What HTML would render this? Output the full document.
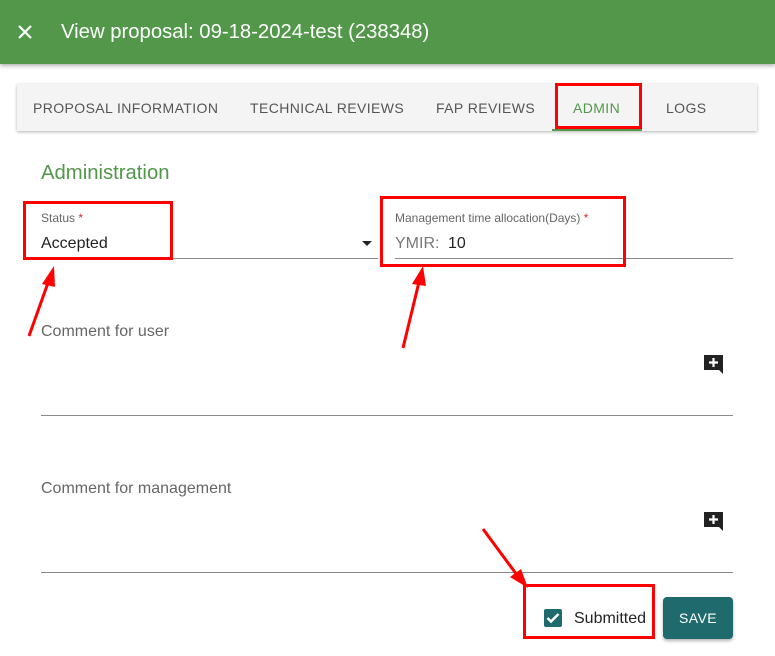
<!DOCTYPE html>
<html><head><meta charset="utf-8"><style>
*{box-sizing:border-box;margin:0;padding:0}
body{width:775px;height:656px;background:#fff;font-family:"Liberation Sans",sans-serif;position:relative;overflow:hidden}
.abs{position:absolute}
.hdr{left:0;top:0;width:775px;height:64px;background:#52974a;box-shadow:0 2px 4px rgba(0,0,0,.3)}
.tabs{left:17px;top:84px;width:740px;height:47px;background:#f4f4f4;box-shadow:0 1px 3px rgba(0,0,0,.3)}
.tab{position:absolute;top:100px;font-size:14px;color:#555;letter-spacing:.4px}
.red{position:absolute;border:3px solid #f00}
.line{position:absolute;height:1px;background:#8a8a8a}
</style></head><body>
<div class="abs hdr"></div>
<svg class="abs" style="left:17px;top:24px" width="16" height="16"><path d="M2 2L14 14M14 2L2 14" stroke="#fff" stroke-width="2.2"/></svg>
<div class="abs" style="left:61px;top:21px;color:#fff;font-size:20.3px">View proposal: 09-18-2024-test (238348)</div>
<div class="abs tabs"></div>
<div class="tab" style="left:33px">PROPOSAL INFORMATION</div>
<div class="tab" style="left:250px">TECHNICAL REVIEWS</div>
<div class="tab" style="left:436px">FAP REVIEWS</div>
<div class="tab" style="left:573px;color:#52974a">ADMIN</div>
<div class="tab" style="left:666px">LOGS</div>
<div class="abs" style="left:552px;top:129px;width:90px;height:2px;background:#52974a"></div>
<div class="red" style="left:555px;top:83px;width:87px;height:46px"></div>
<div class="abs" style="left:41px;top:162px;font-size:20.3px;color:#52974a">Administration</div>
<div class="abs" style="left:41px;top:211px;font-size:12px;color:#666">Status <span style="color:#d32f2f">*</span></div>
<div class="abs" style="left:41px;top:235px;font-size:16px;color:#222">Accepted</div>
<div class="abs" style="left:362px;top:241px;width:0;height:0;border-left:5px solid transparent;border-right:5px solid transparent;border-top:5px solid #222"></div>
<div class="line" style="left:41px;top:258px;width:337px"></div>
<div class="red" style="left:23px;top:201px;width:150px;height:59px"></div>
<div class="abs" style="left:395px;top:211px;font-size:12px;color:#666">Management time allocation(Days) <span style="color:#d32f2f">*</span></div>
<div class="abs" style="left:395px;top:235px;font-size:16px;color:#777">YMIR:</div>
<div class="abs" style="left:448px;top:235px;font-size:16px;color:#222">10</div>
<div class="line" style="left:395px;top:258px;width:338px"></div>
<div class="red" style="left:380px;top:196px;width:246px;height:71px"></div>
<div class="abs" style="left:41px;top:323px;font-size:16px;color:#666">Comment for user</div>
<div class="line" style="left:41px;top:415px;width:692px"></div>
<div class="abs" style="left:41px;top:480px;font-size:16px;color:#666">Comment for management</div>
<div class="line" style="left:41px;top:572px;width:692px"></div>
<svg class="abs" style="left:703px;top:354px" width="21" height="21" viewBox="0 0 21 21"><path d="M1 1h19v19l-4-4H1z" fill="#222"/><path d="M10.5 4v9M6 8.5h9" stroke="#fff" stroke-width="2.2"/></svg>
<svg class="abs" style="left:703px;top:511px" width="21" height="21" viewBox="0 0 21 21"><path d="M1 1h19v19l-4-4H1z" fill="#222"/><path d="M10.5 4v9M6 8.5h9" stroke="#fff" stroke-width="2.2"/></svg>
<div class="red" style="left:523px;top:584px;width:132px;height:55px"></div>
<svg class="abs" style="left:544px;top:609px" width="18" height="18"><rect width="18" height="18" rx="2" fill="#1f6a6c"/><path d="M3.5 9l3.5 3.5L14.5 5" stroke="#fff" stroke-width="2.4" fill="none"/></svg>
<div class="abs" style="left:574px;top:610px;font-size:16px;color:#222">Submitted</div>
<div class="abs" style="left:663px;top:597px;width:70px;height:42px;background:#1f6a6c;border-radius:4px;color:#fff;font-size:14px;line-height:42px;text-align:center;box-shadow:0 2px 3px rgba(0,0,0,.3);letter-spacing:.4px">SAVE</div>
<svg class="abs" style="left:0;top:0" width="775" height="656">
<g stroke="#f00" stroke-width="3" fill="#f00">
<line x1="29" y1="336" x2="49" y2="280"/><polygon points="54,266 42,284 55,287" stroke="none"/>
<line x1="403" y1="348" x2="419" y2="282"/><polygon points="423,266 412,284 426,286" stroke="none"/>
<line x1="483" y1="529" x2="517" y2="575"/><polygon points="528,588 510,577 521,569" stroke="none"/>
</g></svg>
</body></html>
